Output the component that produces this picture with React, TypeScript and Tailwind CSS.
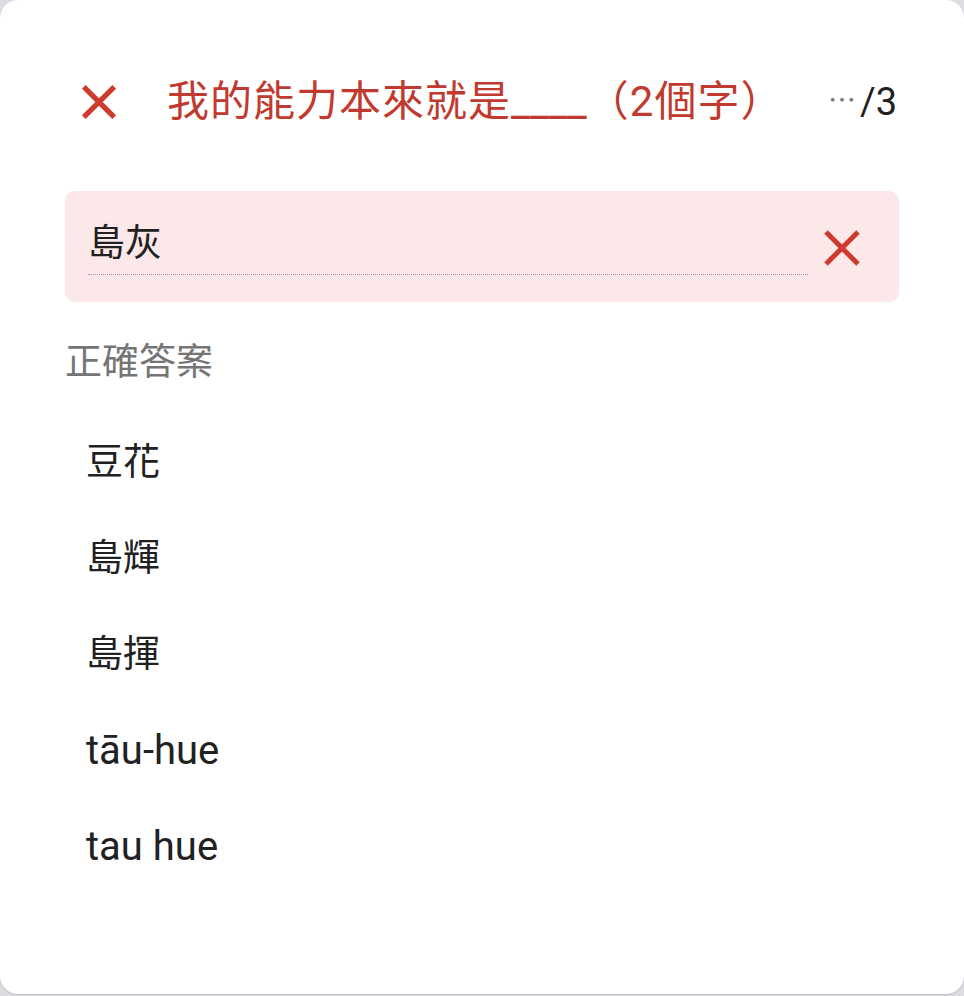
const FONT = "font-['Roboto','Noto_Sans_CJK_TC',sans-serif]";

const ANSWERS = [
  { text: "豆花", latin: false },
  { text: "島輝", latin: false },
  { text: "島揮", latin: false },
  { text: "tāu-hue", latin: true },
  { text: "tau hue", latin: true },
];

function CrossIcon({ size, stroke }: { size: number; stroke: number }) {
  return (
    <svg width={size} height={size} viewBox="0 0 40 40" fill="none">
      <path
        d="M4 4 L36 36 M36 4 L4 36"
        stroke="#cf3a2e"
        strokeWidth={stroke}
        strokeLinecap="butt"
      />
    </svg>
  );
}

export default function App() {
  return (
    <div className={`min-h-screen bg-[#dcdde3] ${FONT}`}>
      <div className="h-[994px] w-full rounded-[18px] bg-white px-[65px] pt-[70px] shadow-[0_1px_2px_rgba(0,0,0,0.15)]">
        <div className="flex h-[64px] items-center">
          <div className="ml-[15px] flex h-[38px] w-[38px] items-center justify-center">
            <CrossIcon size={38} stroke={5.5} />
          </div>
          <h1 className="ml-[49px] text-[42px] leading-none tracking-[1px] text-[#c13a2f]">
            我的能力本來就是<span className="tracking-normal">____</span>（2個字）
          </h1>
          <div className="flex-1" />
          <div className="mr-[2px] flex items-center leading-none">
            <span className="mr-[4px] text-[28px] text-[#7a7a7a]">⋯</span>
            <span className="text-[38px] text-[#212121]">/3</span>
          </div>
        </div>

        <div className="mt-[57px] flex h-[111px] items-start rounded-[10px] bg-[#fce8e8] pl-[23px]">
          <div className="mt-[28px] w-[720px] border-b-[1.5px] border-dotted border-[#a89494] pb-[5px]">
            <div className="text-[37px] leading-[50px] text-[#212121]">島灰</div>
          </div>
          <div className="ml-[14px] mt-[37px] flex h-[40px] w-[40px] items-center justify-center">
            <CrossIcon size={40} stroke={5} />
          </div>
        </div>

        <div className="mt-[36px] text-[37px] leading-[50px] text-[#757575]">正確答案</div>

        <div className="mt-[27px] flex flex-col pl-[21px]">
          {ANSWERS.map((a) => (
            <div
              key={a.text}
              className={`flex h-[96px] items-center text-[#212121] ${a.latin ? "text-[40px]" : "text-[37px]"}`}
            >
              {a.text}
            </div>
          ))}
        </div>
      </div>
    </div>
  );
}
